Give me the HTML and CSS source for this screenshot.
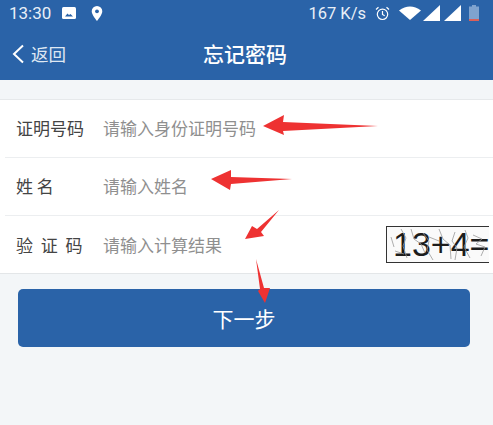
FILE: index.html
```html
<!DOCTYPE html>
<html lang="zh-CN">
<head>
    <meta charset="UTF-8">
    <meta name="viewport" content="width=device-width, initial-scale=1.0">
    <title>忘记密码</title>
    <link rel="stylesheet" href="styles.css">
</head>
<body>
    <div class="page">
        <header class="top">
            <div class="status">
                <span class="time">13:30</span>
                <svg class="ic-pic" width="14" height="12" viewBox="0 0 14 12"><rect width="14" height="12" rx="1.5" fill="#fff"/><path d="M3 9.5l2.5-3 1.5 1.6 1.500-1.100 2.500 2.500z" fill="#2a63a8"/></svg>
                <svg class="ic-pin" width="12" height="15" viewBox="0 0 12 15"><path d="M6 0a5.300 5.300 0 0 0-5.300 5.300C.7 9 6 15 6 15s5.300-6 5.300-9.700A5.300 5.300 0 0 0 6 0z" fill="#fff"/><circle cx="6" cy="5.300" r="1.900" fill="#2a63a8"/></svg>
                <span class="spacer"></span>
                <span class="speed">167 K/s</span>
                <svg class="ic-alarm" width="15" height="15" viewBox="0 0 15 15" fill="none" stroke="#fff" stroke-width="1.200"><circle cx="7.500" cy="8.300" r="5.200"/><path d="M7.500 5v3.500l2.200 1.300M1 3.500L3.500 1.200M14 3.500L11.500 1.200"/></svg>
                <svg class="ic-wifi" width="22" height="14" viewBox="0 0 22 14"><path d="M0 4.500Q11-3.500 22 4.500L11 14z" fill="#fff"/></svg>
                <svg class="ic-sig" width="17" height="16" viewBox="0 0 17 16"><path d="M17 0v16H0z" fill="#fff"/></svg>
                <svg class="ic-sig" width="17" height="16" viewBox="0 0 17 16"><path d="M17 0v16H0z" fill="#fff"/></svg>
                <svg class="ic-bat" width="10" height="16" viewBox="0 0 10 16"><path d="M3 0h4v1.500h3V16H0V1.500h3z" fill="#7fa3cf"/><rect y="14" width="10" height="2" fill="#d9605a"/></svg>
            </div>
            <div class="nav">
                <div class="back">
                    <svg width="14" height="20" viewBox="0 0 14 20" fill="none" stroke="#fff" stroke-width="2"><path d="M12 1.500L3 10l9 8.500"/></svg>
                    <span>返回</span>
                </div>
                <div class="title">忘记密码</div>
            </div>
        </header>

        <div class="form">
            <div class="row">
                <label class="lbl">证明号码</label>
                <span class="hint">请输入身份证明号码</span>
            </div>
            <div class="row">
                <label class="lbl">姓 名</label>
                <span class="hint">请输入姓名</span>
            </div>
            <div class="row row-last">
                <label class="lbl lbl-code">验 证 码</label>
                <span class="hint">请输入计算结果</span>
                <div class="captcha">
                    <span class="captcha-text">13+4=</span>
                    <svg class="noise" width="103" height="35" viewBox="0 0 103 35" fill="none" stroke="#999" stroke-width="0.800">
                        <path d="M14 2l5 9-3 8 4 12M24 2l3 10 7 5 4 9M36 6l6 8-2 9 6 10M52 2l4 10 7 6 1 14M68 5l-3 9 5 7-2 12M78 3l3 8-4 9 6 11"/>
                        <path d="M4 10l3 10M8 24l9 3M42 10l10 4M86 8l9 4-6 5 9 3-4 9"/>
                    </svg>
                </div>
            </div>
        </div>

        <button class="next" type="button">下一步</button>

        <!-- red arrows drawn over the screenshot -->
        <svg class="arrows" width="493" height="425" viewBox="0 0 493 425">
            <path d="M263 126L284 115L283 122L378 126L283 131L284 135z" fill="#ee3232"/>
            <path d="M211 179L231 170L231 177L292 179L231 184L230 190z" fill="#ee3232"/>
            <path d="M245 239L252 226L257 229L279 210L261 232L264 236z" fill="#ee3232"/>
            <path d="M256 259L264 288L270 288L265 303L258 291L260 289z" fill="#ee3232"/>
        </svg>
    </div>
</body>
</html>
```

FILE: styles.css
```css
* {
    box-sizing: border-box;
}

body {
    margin: 0;
    font-family: "Noto Sans CJK SC", "Noto Sans", sans-serif;
}

.page {
    position: relative;
    width: 493px;
    height: 425px;
    overflow: hidden;
    background-color: #f3f6f8;
}

.top {
    height: 80px;
    background-color: #2a63a8;
    color: #fff;
}

.status {
    display: flex;
    align-items: center;
    height: 26px;
    padding: 0 14px 0 9px;
}

.time {
    font-family: Roboto, sans-serif;
    font-size: 17px;
    color: #e8eff7;
    margin-right: 11px;
}

.ic-pic {
    margin-right: 15px;
}

.spacer {
    flex: 1;
}

.speed {
    font-family: Roboto, sans-serif;
    font-size: 16.500px;
    color: #e8eff7;
    margin-right: 9px;
}

.ic-alarm {
    margin-right: 9px;
}

.ic-wifi {
    margin-right: 2px;
}

.ic-sig {
    margin-right: 4px;
}

.ic-sig + .ic-sig {
    margin-right: 8px;
}

.nav {
    position: relative;
    display: flex;
    align-items: center;
    justify-content: center;
    height: 54px;
}

.back {
    position: absolute;
    left: 11px;
    top: 15px;
    display: flex;
    align-items: center;
    gap: 6px;
    font-size: 17.500px;
    color: #dfe8f3;
}

.title {
    font-size: 21px;
    font-weight: 500;
    margin: 0 3px 1px 0;
}

.form {
    margin-top: 19px;
    background-color: #fff;
    border-top: 1px solid #e6e9eb;
    border-bottom: 1px solid #e3e6e8;
}

.row {
    display: flex;
    align-items: center;
    height: 58px;
    margin-left: 5px;
    padding: 0 0 2px 11px;
    border-bottom: 1px solid #eceef0;
}

.row-last {
    border-bottom: none;
    height: 57px;
    padding-bottom: 0;
}

.lbl {
    width: 87px;
    font-size: 17px;
    color: #444;
}

.lbl-code {
    word-spacing: 4px;
}

.hint {
    font-size: 17px;
    color: #8f8f8f;
}

.captcha {
    position: relative;
    flex-shrink: 0;
    margin: 0 4px 0 auto;
    width: 103px;
    height: 37px;
    border: 1px solid #333;
    border-right: none;
    background-color: #fafafa;
    overflow: hidden;
    padding-left: 6px;
    font-family: "Liberation Sans", sans-serif;
    font-size: 34px;
    line-height: 35px;
    color: #1c1c1c;
    white-space: nowrap;
}

.noise {
    position: absolute;
    left: 0;
    top: 0;
}

.next {
    display: block;
    width: 452px;
    height: 58px;
    margin: 15px 0 0 18px;
    border: none;
    border-radius: 5px;
    background-color: #2a63a8;
    color: #fff;
    font-family: inherit;
    font-size: 21px;
}

.arrows {
    position: absolute;
    left: 0;
    top: 0;
    pointer-events: none;
}
```
